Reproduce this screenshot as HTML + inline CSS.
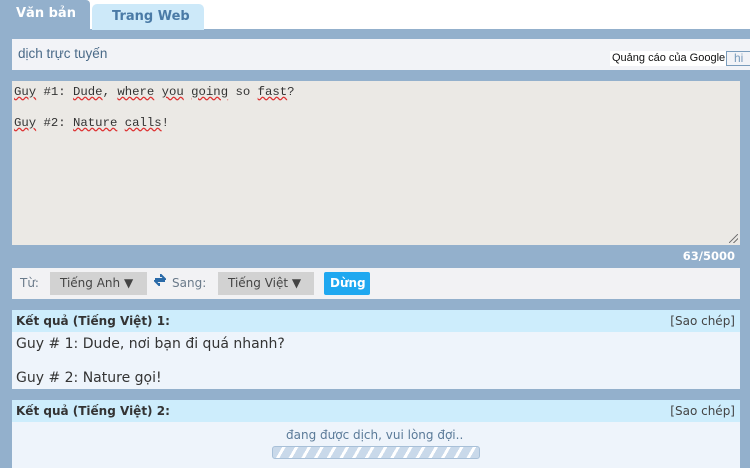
<!DOCTYPE html>
<html><head><meta charset="utf-8"><style>
*{margin:0;padding:0;box-sizing:border-box}
body{width:750px;height:468px;overflow:hidden;background:#fff;font-family:"DejaVu Sans","Liberation Sans",sans-serif;position:relative}
.abs{position:absolute}
.bg{left:0;top:29px;width:750px;height:439px;background:#93b0cc}
</style></head><body>
<div class="abs bg"></div>
<div class="abs" style="left:0;top:0;width:90px;height:30px;background:#93b0cc;border-radius:0 4px 0 0"></div>
<div class="abs" style="left:16px;top:6px;font-size:13px;font-weight:bold;color:#fff">Văn bản</div>
<div class="abs" style="left:92px;top:4px;width:112px;height:26px;background:#cde9f9;border-radius:5px 5px 0 0"></div>
<div class="abs" style="left:112px;top:9px;font-size:13px;font-weight:bold;color:#4a7aa6">Trang Web</div>

<div class="abs" style="left:12px;top:39px;width:738px;height:31px;background:#f2f3f7"></div>
<div class="abs" style="left:18px;top:46px;font-size:13.5px;color:#4a6a88;font-family:'Liberation Sans',sans-serif">dịch trực tuyến</div>
<div class="abs" style="left:610px;top:51px;width:116px;height:15px;background:#fff;font-size:11px;font-family:'Liberation Sans',sans-serif;color:#111;padding-left:2px;line-height:15px">Quảng cáo của Google</div>
<div class="abs" style="left:726px;top:51px;width:24px;height:15px;border:1px solid #7a9cbc;border-right:none;font-size:12px;color:#7a9cbc;line-height:13px;padding-left:7px;font-family:'Liberation Sans',sans-serif">hi</div>

<div class="abs" style="left:12px;top:81px;width:728px;height:164px;background:#ebe9e5"></div>
<div class="abs" style="left:14px;top:85px;font-family:'Liberation Mono',monospace;font-size:12.3px;color:#333;line-height:15.5px;white-space:pre"><span style="text-decoration:underline wavy #d33">Guy</span> #1: <span style="text-decoration:underline wavy #d33">Dude</span>, <span style="text-decoration:underline wavy #d33">where</span> <span style="text-decoration:underline wavy #d33">you</span> <span style="text-decoration:underline wavy #d33">going</span> so <span style="text-decoration:underline wavy #d33">fast</span>?

<span style="text-decoration:underline wavy #d33">Guy</span> #2: <span style="text-decoration:underline wavy #d33">Nature</span> <span style="text-decoration:underline wavy #d33">calls</span>!</div>
<div class="abs" style="left:729px;top:234px;width:9px;height:9px;background:linear-gradient(135deg,transparent 45%,#777 45%,#777 55%,transparent 55%,transparent 70%,#777 70%,#777 80%,transparent 80%)"></div>
<div class="abs" style="right:15px;top:249px;font-size:11.5px;font-weight:bold;color:#fff">63/5000</div>

<div class="abs" style="left:12px;top:268px;width:728px;height:31px;background:#f2f2f4"></div>
<div class="abs" style="left:20px;top:276px;font-size:12px;color:#6a7a8a">Từ:</div>
<div class="abs" style="left:50px;top:272px;width:97px;height:23px;background:#d2d2d2;font-size:12px;color:#444;padding:4px 0 0 10px">Tiếng Anh ▼</div>
<svg class="abs" style="left:154px;top:274px" width="12" height="12" viewBox="0 0 12 12"><path d="M1 5H11L7 1V3" fill="none" stroke="#2a6aa8" stroke-width="2"/><path d="M11 7H1L5 11V9" fill="none" stroke="#2a6aa8" stroke-width="2"/></svg>
<div class="abs" style="left:172px;top:276px;font-size:12px;color:#6a7a8a">Sang:</div>
<div class="abs" style="left:218px;top:272px;width:96px;height:23px;background:#d2d2d2;font-size:12px;color:#444;padding:4px 0 0 10px">Tiếng Việt ▼</div>
<div class="abs" style="left:324px;top:272px;width:46px;height:23px;background:#1fa8f0;border-radius:2px;font-size:12px;color:#fff;font-weight:bold;padding:4px 0 0 6px">Dừng</div>

<div class="abs" style="left:12px;top:310px;width:728px;height:22px;background:#cdedfc"></div>
<div class="abs" style="left:16px;top:314px;font-size:12px;font-weight:bold;color:#333">Kết quả (Tiếng Việt) 1:</div>
<div class="abs" style="right:15px;top:314px;font-size:12px;color:#444">[Sao chép]</div>
<div class="abs" style="left:12px;top:332px;width:728px;height:57px;background:#eef4fb"></div>
<div class="abs" style="left:16px;top:327px;font-size:14px;color:#333;line-height:34px">Guy # 1: Dude, nơi bạn đi quá nhanh?<br>Guy # 2: Nature gọi!</div>

<div class="abs" style="left:12px;top:400px;width:728px;height:22px;background:#cdedfc"></div>
<div class="abs" style="left:16px;top:404px;font-size:12px;font-weight:bold;color:#333">Kết quả (Tiếng Việt) 2:</div>
<div class="abs" style="right:15px;top:404px;font-size:12px;color:#444">[Sao chép]</div>
<div class="abs" style="left:12px;top:422px;width:728px;height:46px;background:#eef4fb"></div>
<div class="abs" style="left:286px;top:428px;font-size:12px;color:#5a7a98">đang được dịch, vui lòng đợi..</div>
<div class="abs" style="left:272px;top:446px;width:208px;height:13px;border:1px solid #a8c0d8;border-radius:3px;background:repeating-linear-gradient(120deg,#c9d9ea 0 8px,#fff 8px 11px)"></div>
</body></html>
